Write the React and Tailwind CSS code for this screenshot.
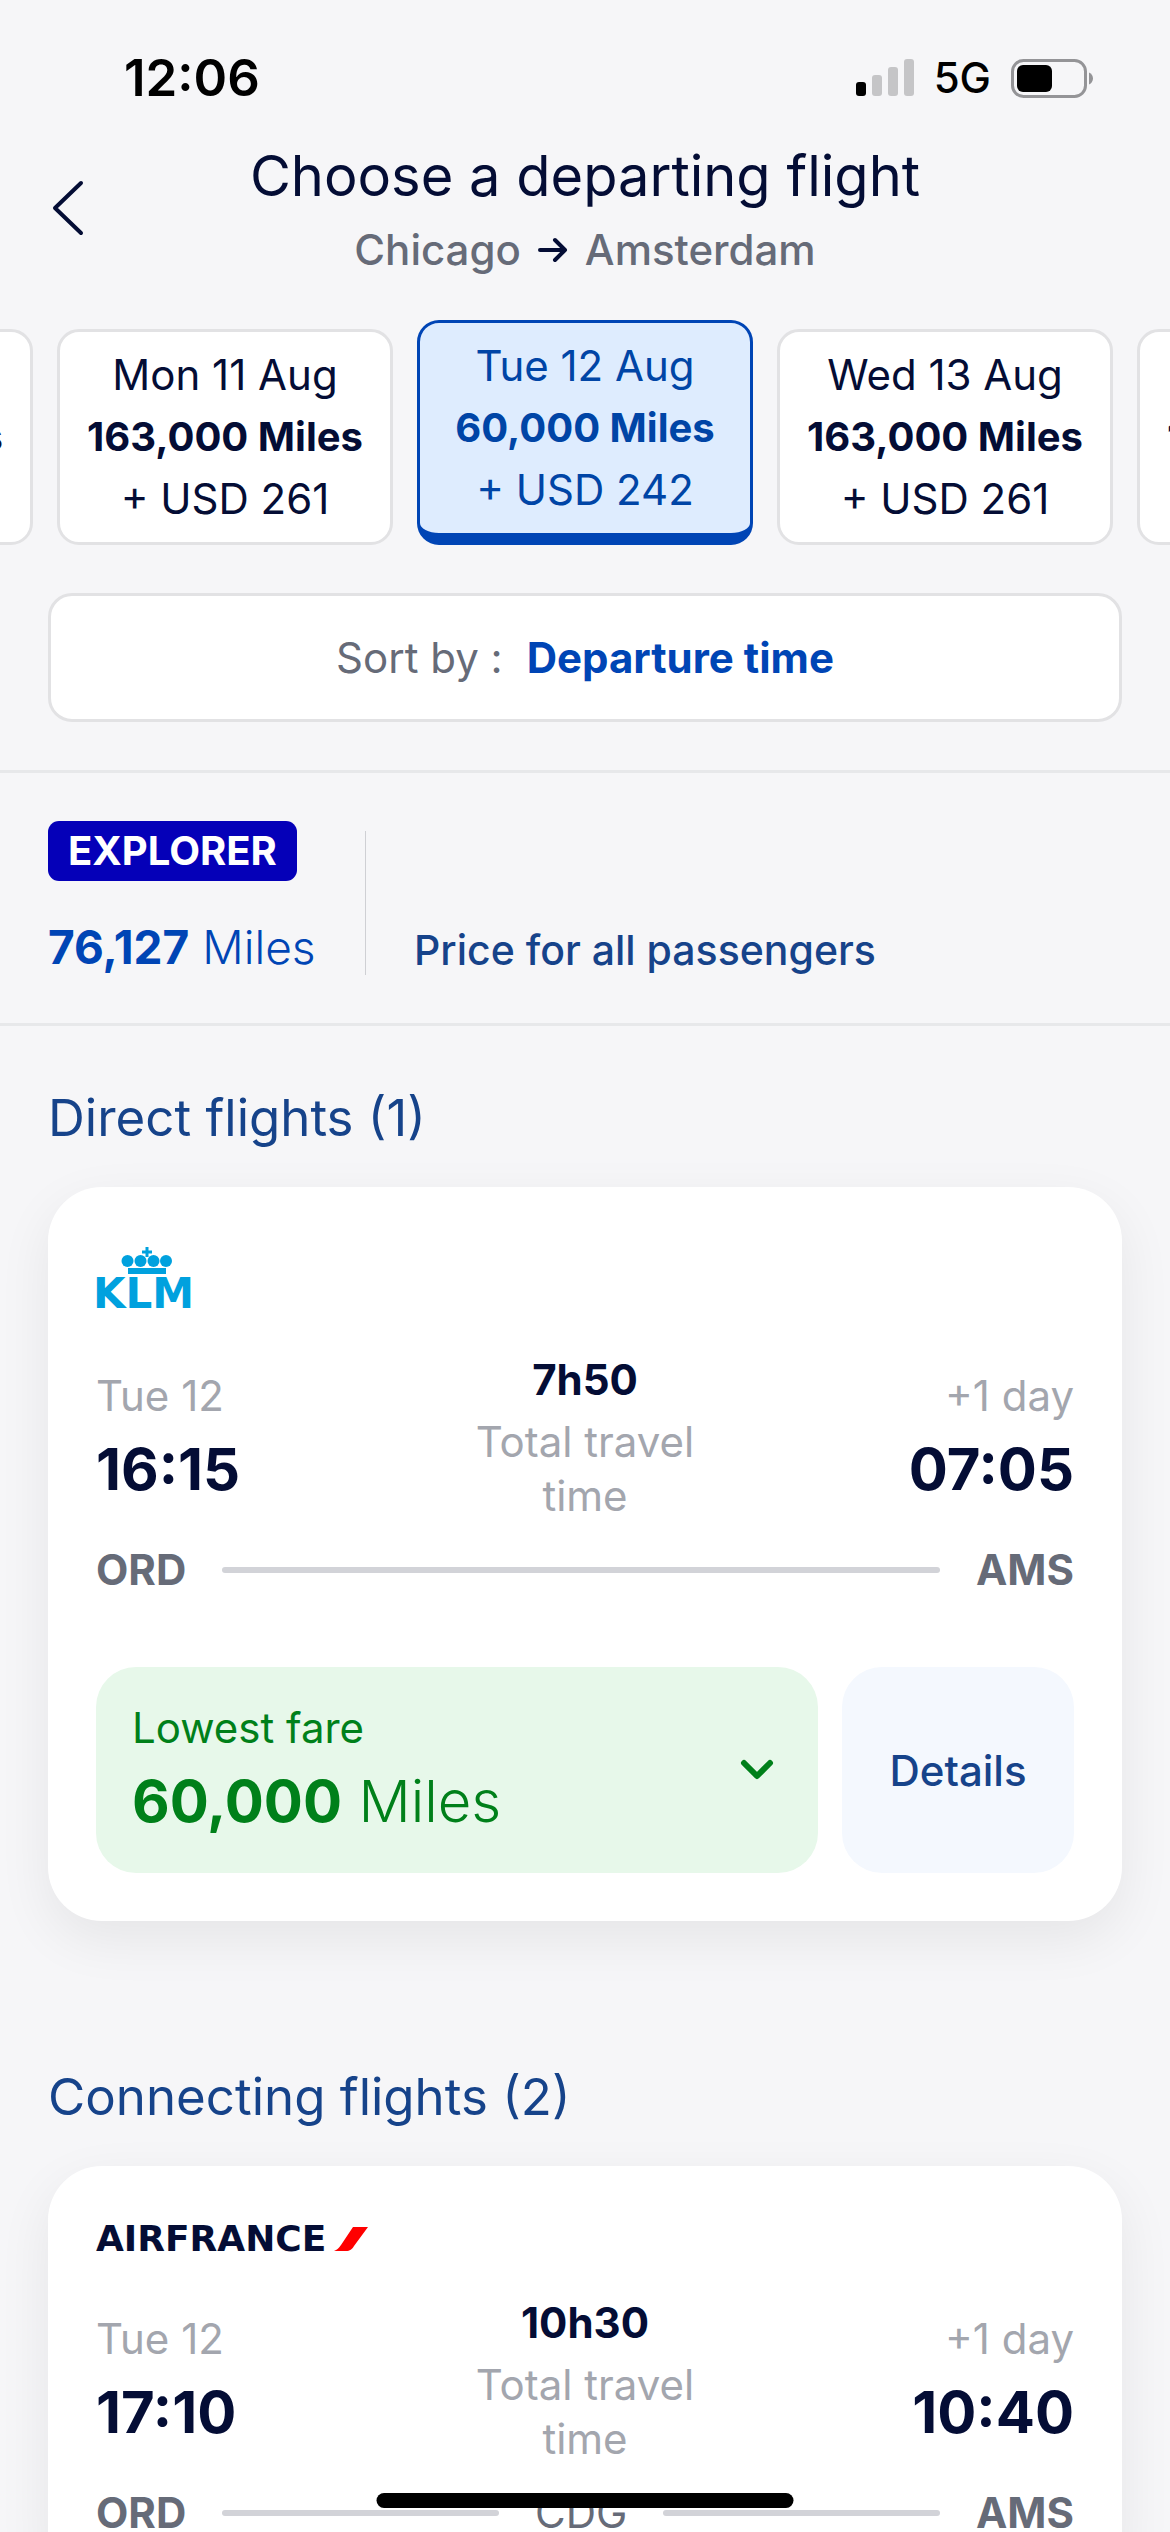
import React, { useState } from 'react';

const days = [
  { id: 'sun-10', date: 'Sun 10 Aug', miles: '163,000', tax: '261' },
  { id: 'mon-11', date: 'Mon 11 Aug', miles: '163,000', tax: '261' },
  { id: 'tue-12', date: 'Tue 12 Aug', miles: '60,000', tax: '242' },
  { id: 'wed-13', date: 'Wed 13 Aug', miles: '163,000', tax: '261' },
  { id: 'thu-14', date: 'Thu 14 Aug', miles: '163,000', tax: '261' },
];

const directFlights = [
  {
    id: 'klm',
    airline: 'klm',
    date: 'Tue 12',
    departure: '16:15',
    arrival: '07:05',
    duration: '7h50',
    stops: [],
    fare: '60,000',
  },
];

const connectingFlights = [
  {
    id: 'af',
    airline: 'airfrance',
    date: 'Tue 12',
    departure: '17:10',
    arrival: '10:40',
    duration: '10h30',
    stops: ['CDG'],
  },
];

function StatusBar() {
  return (
    <div className="flex h-[140px] items-center justify-between pt-[15px] pr-[76px] pl-[124px] text-black">
      <span className="text-[51px] leading-none font-semibold">12:06</span>
      <div className="flex items-center">
        <svg className="h-[38px] w-[58px]" viewBox="0 0 58 38" aria-label="Signal strength">
          <rect x="0" y="23" width="10" height="14" rx="3" fill="#000" />
          <rect x="16" y="16" width="10" height="21" rx="3" fill="#c5c5c7" />
          <rect x="32" y="8" width="10" height="29" rx="3" fill="#c5c5c7" />
          <rect x="48" y="0" width="10" height="37" rx="3" fill="#c5c5c7" />
        </svg>
        <span className="ml-5 text-[42px] leading-none font-medium">5G</span>
        <svg className="ml-5 h-10 w-[83px]" viewBox="0 0 83 40" aria-label="Battery">
          <rect x="1.5" y="2.5" width="73" height="36" rx="11" fill="none" stroke="#949497" strokeWidth="3" />
          <rect x="6" y="7" width="35" height="27" rx="6" fill="#000" />
          <path d="M78 14.5c2.600 1 4 3.500 4 6s-1.400 5-4 6z" fill="#949497" />
        </svg>
      </div>
    </div>
  );
}

function Header() {
  return (
    <header className="flex px-9">
      <button type="button" aria-label="Back" className="flex h-[136px] w-24 items-center pl-4">
        <svg className="h-[58px] w-8" viewBox="0 0 32 58" fill="none" stroke="#040d35" strokeWidth="4" strokeLinecap="round" strokeLinejoin="round">
          <path d="M29 4 3 29l26 25" />
        </svg>
      </button>
      <div className="flex-1 text-center">
        <h1 className="text-[56px] leading-[72px] font-normal text-[#040d35]">Choose a departing flight</h1>
        <p className="flex items-center justify-center gap-4 text-[42px] leading-[76px] font-medium text-[#666b78]">
          Chicago
          <svg className="h-[26px] w-8" viewBox="0 0 32 26" fill="none" stroke="#040d35" strokeWidth="4" strokeLinecap="round" strokeLinejoin="round">
            <path d="M3 13h25M18 3l10 10-10 10" />
          </svg>
          Amsterdam
        </p>
      </div>
      <div className="w-24" />
    </header>
  );
}

function DayTabs() {
  const [selected, setSelected] = useState('tue-12');

  return (
    <div className="mt-8 flex items-end justify-center gap-6 overflow-hidden">
      {days.map(day => (
        <button
          key={day.id}
          type="button"
          aria-pressed={day.id === selected}
          onClick={() => setSelected(day.id)}
          className={
            day.id === selected
              ? 'w-[336px] shrink-0 rounded-[22px] border-[3px] border-b-[12px] border-[#0045b5] bg-[#deecfe] py-3 text-[42px] leading-[62px] whitespace-nowrap text-[#0045a6]'
              : 'w-[336px] shrink-0 rounded-[22px] border-[3px] border-[#e2e2e4] bg-white py-3 text-[42px] leading-[62px] whitespace-nowrap text-[#040d35]'
          }
        >
          <span className="block">{day.date}</span>
          <span className="block text-[40px] font-bold">{day.miles} Miles</span>
          <span className="block">+ USD {day.tax}</span>
        </button>
      ))}
    </div>
  );
}

function MemberBar() {
  return (
    <section className="mt-12 flex border-y-[3px] border-[#e7e8ea] px-12 py-12">
      <div className="flex w-[317px] flex-col items-start justify-between">
        <span className="rounded-[11px] bg-[#0500b8] px-5 text-[40px] leading-[60px] font-bold text-white">EXPLORER</span>
        <p className="text-[46px] leading-[56px] font-light text-[#0045b5]">
          <b className="font-bold">76,127</b> Miles
        </p>
      </div>
      <div className="mt-[10px] flex h-36 items-end border-l border-[#cfd0d4] pl-12">
        <p className="text-[41px] leading-[50px] font-medium text-[#16438a]">Price for all passengers</p>
      </div>
    </section>
  );
}

function KlmLogo() {
  return (
    <svg className="h-[62px] w-[104px]" viewBox="0 0 104 62" fill="#00a1de" aria-label="KLM">
      <path d="M49.500 0h3v3.500H56v3h-3.500V10h-3V6.500H46v-3h3.500z" />
      <circle cx="31.500" cy="14" r="6" />
      <circle cx="44.500" cy="14" r="6" />
      <circle cx="57.500" cy="14" r="6" />
      <circle cx="70" cy="14" r="6" />
      <rect x="32" y="21" width="38" height="6" />
      <text x="-3" y="61" className="font-['DejaVu_Sans',sans-serif] text-[42px] font-bold">KLM</text>
    </svg>
  );
}

function AirFranceLogo() {
  return (
    <div className="flex items-center gap-2">
      <span className="font-['DejaVu_Sans',sans-serif] text-[36px] leading-none font-bold text-[#040d35]">AIRFRANCE</span>
      <svg className="h-6 w-[34px]" viewBox="0 0 34 24" fill="#ff0000">
        <path d="M0 24c3-1 5-3 7-6L19 0h15L20 19c-2 3.500-4 5-8 5z" />
      </svg>
    </div>
  );
}

function Route({ stops }) {
  return (
    <div className="mt-5 flex items-center gap-9 text-[42px] leading-[54px] text-[#666b78]">
      <span className="font-bold">ORD</span>
      <span className="h-[6px] flex-1 rounded-full bg-[#d2d3d8]" />
      {stops.map(stop => (
        <React.Fragment key={stop}>
          <span>{stop}</span>
          <span className="h-[6px] flex-1 rounded-full bg-[#d2d3d8]" />
        </React.Fragment>
      ))}
      <span className="font-bold">AMS</span>
    </div>
  );
}

function FlightCard({ flight }) {
  return (
    <article className="mx-12 mt-[37px] rounded-[54px] bg-white p-12 shadow-[0_18px_54px_rgba(0,0,0,0.07)]">
      <div className={flight.airline === 'klm' ? 'mb-8 flex h-[86px] items-center' : 'mb-8 flex h-[50px] items-center'}>
        {flight.airline === 'klm' ? <KlmLogo /> : <AirFranceLogo />}
      </div>

      <div className="flex justify-between text-[42px] leading-[54px]">
        <div className="flex-1 pt-4">
          <p className="text-[#a3a6ae]">{flight.date}</p>
          <p className="text-[58px] leading-[92px] font-bold text-[#040d35]">{flight.departure}</p>
        </div>
        <div className="w-[250px] text-center">
          <p className="font-bold text-[#040d35]">{flight.duration}</p>
          <p className="mt-2 text-[#a3a6ae]">Total travel time</p>
        </div>
        <div className="flex-1 pt-4 text-right">
          <p className="text-[#a3a6ae]">+1 day</p>
          <p className="text-[58px] leading-[92px] font-bold text-[#040d35]">{flight.arrival}</p>
        </div>
      </div>

      <Route stops={flight.stops} />

      {flight.fare && (
        <div className="mt-[70px] flex gap-6">
          <button type="button" className="flex h-[206px] flex-1 items-center justify-between rounded-[40px] bg-[#e7f8ea] pr-11 pl-9 text-left text-[#00801a]">
            <span>
              <span className="block text-[42px] leading-[62px]">Lowest fare</span>
              <span className="block text-[58px] leading-[84px] font-light">
                <b className="font-bold">{flight.fare}</b> Miles
              </span>
            </span>
            <svg className="h-6 w-[34px]" viewBox="0 0 34 24" fill="none" stroke="currentColor" strokeWidth="6" strokeLinecap="round" strokeLinejoin="round">
              <path d="m4 5 13 13L30 5" />
            </svg>
          </button>
          <button type="button" className="h-[206px] w-[232px] rounded-[40px] bg-[#f4f8fe] text-[42px] font-medium text-[#16438a]">Details</button>
        </div>
      )}
    </article>
  );
}

export default function App() {
  return (
    <div className="h-screen overflow-hidden bg-[#f6f6f8] font-['Inter',sans-serif]">
      <StatusBar />
      <Header />
      <DayTabs />

      <button type="button" className="mx-12 mt-12 flex h-[129px] w-[calc(100%-96px)] items-center justify-center gap-6 rounded-[24px] border-[3px] border-[#e2e2e4] bg-white text-[42px]">
        <span className="text-[#666b78]">Sort by :</span>
        <span className="font-bold text-[#0045b5]">Departure time</span>
      </button>

      <MemberBar />

      <h2 className="mt-[60px] px-12 text-[51px] leading-[64px] text-[#16438a]">Direct flights (1)</h2>
      {directFlights.map(flight => (
        <FlightCard key={flight.id} flight={flight} />
      ))}

      <h2 className="mt-36 px-12 text-[51px] leading-[64px] text-[#16438a]">Connecting flights (2)</h2>
      {connectingFlights.map(flight => (
        <FlightCard key={flight.id} flight={flight} />
      ))}

      {/* home indicator */}
      <div className="fixed bottom-6 left-1/2 h-[15px] w-[417px] -translate-x-1/2 rounded-full bg-black" />
    </div>
  );
}
